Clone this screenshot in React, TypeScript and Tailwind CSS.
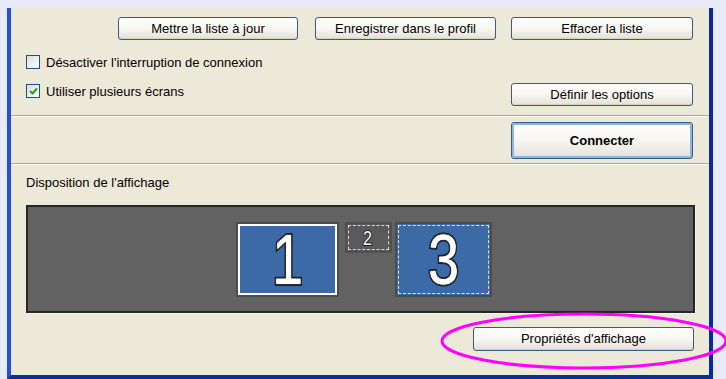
import React from 'react';

const font = { fontFamily: '"Liberation Sans", Arial, sans-serif' };

const XpButton: React.FC<{ label: string; className?: string; bold?: boolean }> = ({ label, className = '', bold }) => (
  <div
    className={`flex items-center justify-center rounded-[3px] border border-[#3d5a7f] bg-gradient-to-b from-white via-[#f7f6f1] to-[#e3e1d6] text-[13px] text-black ${
      bold ? 'font-bold shadow-[inset_0_0_0_2px_#8fb5e3]' : 'shadow-[inset_0_-1px_0_#d6d2c2]'
    } ${className}`}
  >
    {label}
  </div>
);

const Check: React.FC<{ checked?: boolean; label: string }> = ({ checked, label }) => (
  <div className="flex h-4 items-center gap-[6px] text-[13px] leading-none">
    <div className="flex h-[14px] w-[14px] items-center justify-center border border-[#1c5180] bg-gradient-to-br from-[#dcdcd7] to-white">
      {checked && (
        <svg width="9" height="8" viewBox="0 0 9 8">
          <path d="M1 4 L3.5 6.5 L8 1.5" fill="none" stroke="#21a121" strokeWidth="2" />
        </svg>
      )}
    </div>
    <span>{label}</span>
  </div>
);

const Separator = () => (
  <div className="h-[2px] border-t border-t-[#aca899] bg-white" />
);

const bigDigit =
  'text-[70px] leading-none text-white [-webkit-text-stroke:4px_#18202c] [paint-order:stroke_fill] [text-shadow:0_0_1px_white] scale-x-[0.8]';

export default function App() {
  return (
    <div className="relative h-[379px] w-[726px] overflow-hidden bg-[#e8eaf8] pl-[7px] pt-[8px]" style={font}>
      <div className="h-[371px] w-[706px] border-b-4 border-l-4 border-r-4 border-b-[#0c2f9c] border-l-[#1f50d6] border-r-[#0b2a98] bg-[#ece9d8]">
        {/* top buttons */}
        <div className="flex justify-end pr-[16px] pt-[9px]">
          <XpButton label="Mettre la liste à jour" className="h-[23px] w-[180px]" />
          <XpButton label="Enregistrer dans le profil" className="ml-[17px] h-[23px] w-[181px]" />
          <XpButton label="Effacer la liste" className="ml-[15px] h-[23px] w-[182px]" />
        </div>

        <div className="mt-[14px] pl-[15px]">
          <Check label="Désactiver l'interruption de connexion" />
        </div>
        <div className="mt-[13px] flex items-start justify-between pl-[15px] pr-[16px]">
          <Check checked label="Utiliser plusieurs écrans" />
          <XpButton label="Définir les options" className="h-[23px] w-[182px]" />
        </div>

        <div className="mt-[9px]">
          <Separator />
        </div>

        <div className="mt-[5px] flex justify-end pr-[16px]">
          <XpButton bold label="Connecter" className="h-[37px] w-[182px]" />
        </div>

        <div className="mt-[4px]">
          <Separator />
        </div>

        <div className="mt-[11px] h-[14px] pl-[15px] text-[13px] leading-[14px]">Disposition de l'affichage</div>

        {/* display layout */}
        <div className="ml-[15px] mt-[15px] flex h-[108px] w-[669px] items-start justify-center border-2 border-[#262626] bg-[#626262] pl-[6px] pt-[15px] shadow-[1px_1px_0_#f6f4ec]">
          <div className="flex h-[75px] w-[103px] items-center justify-center border-2 border-[#4c4c4c] bg-[#3b6aa6] shadow-[inset_0_0_0_2px_white]">
            <span className={bigDigit}>1</span>
          </div>
          <div className="ml-[6px] flex h-[31px] w-[47px] justify-center border-2 border-[#505050] bg-[#5a5a5a] outline-1 outline-offset-[-4px] outline-dashed outline-[#d8d8d8]">
            <span className="mt-[4px] text-[20px] leading-none text-white [-webkit-text-stroke:2px_#18202c] [paint-order:stroke_fill] scale-x-[0.8]">
              2
            </span>
          </div>
          <div className="ml-[3px] flex h-[75px] w-[97px] items-center justify-center border-2 border-[#4c4c4c] bg-[#3b6aa6] outline-1 outline-offset-[-4px] outline-dashed outline-[#e4e4e4]">
            <span className={bigDigit}>3</span>
          </div>
        </div>

        <div className="mt-[14px] flex justify-end pr-[15px]">
          <XpButton label="Propriétés d'affichage" className="h-[24px] w-[221px]" />
        </div>
      </div>

      <svg className="pointer-events-none absolute left-0 top-0" width="726" height="379">
        <ellipse cx="584" cy="341" rx="142" ry="27" fill="none" stroke="#ff00ff" strokeWidth="3" />
      </svg>
    </div>
  );
}
